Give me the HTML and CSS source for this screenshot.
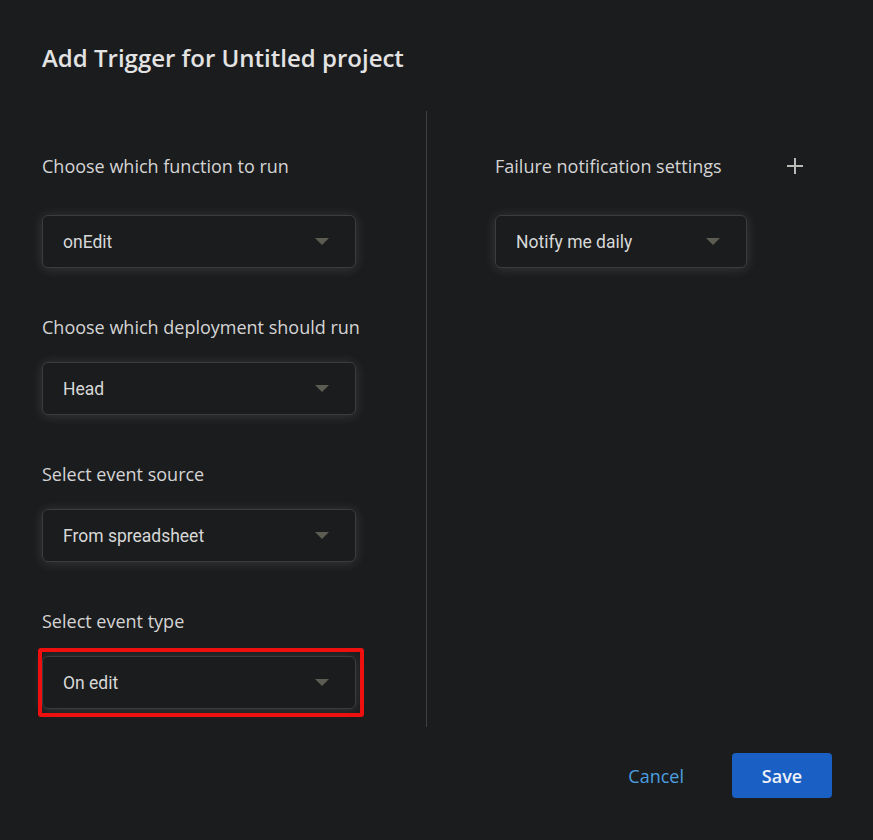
FILE: index.html
```html
<!DOCTYPE html>
<html lang="en">
<head>
    <meta charset="UTF-8">
    <meta name="viewport" content="width=device-width, initial-scale=1.0">
    <title>Add Trigger</title>
    <link rel="stylesheet" href="styles.css">
</head>
<body>
    <div class="dialogo">
        <h1 class="titulo">Add Trigger for Untitled project</h1>

        <div class="cuerpo">
            <!-- Columna izquierda -->
            <div class="columna-izq">
                <div class="campo primero">
                    <div class="etiqueta">Choose which function to run</div>
                    <div class="selector">
                        <span>onEdit</span>
                        <span class="flecha"></span>
                    </div>
                </div>
                <div class="campo">
                    <div class="etiqueta">Choose which deployment should run</div>
                    <div class="selector">
                        <span>Head</span>
                        <span class="flecha"></span>
                    </div>
                </div>
                <div class="campo">
                    <div class="etiqueta">Select event source</div>
                    <div class="selector">
                        <span>From spreadsheet</span>
                        <span class="flecha"></span>
                    </div>
                </div>
                <div class="campo">
                    <div class="etiqueta">Select event type</div>
                    <div class="selector marcado">
                        <span>On edit</span>
                        <span class="flecha"></span>
                    </div>
                </div>
            </div>

            <!-- Columna derecha -->
            <div class="columna-der">
                <div class="campo primero">
                    <div class="fila-etiqueta">
                        <div class="etiqueta">Failure notification settings</div>
                        <svg class="mas" width="18" height="18" viewBox="0 0 18 18">
                            <path d="M9 1v16M1 9h16" stroke="currentColor" stroke-width="2" fill="none"/>
                        </svg>
                    </div>
                    <div class="selector corto">
                        <span>Notify me daily</span>
                        <span class="flecha"></span>
                    </div>
                </div>
            </div>
        </div>

        <div class="pie">
            <button class="boton-cancelar">Cancel</button>
            <button class="boton-guardar">Save</button>
        </div>
    </div>
</body>
</html>
```

FILE: styles.css
```css
body {
    margin: 0;
    background: #1b1c1e;
    font-family: 'Open Sans', 'Noto Sans', sans-serif;
    color: #d6d6d6;
}

.dialogo {
    padding: 42px 41px 0 42px;
}

.titulo {
    margin: 0;
    font-size: 24px;
    line-height: 32px;
    font-weight: 600;
    color: #e3e3e3;
}

/* Cuerpo con dos columnas */
.cuerpo {
    display: flex;
    margin-top: 37px;
}

.columna-izq {
    width: 384px;
    padding: 43px 0 18px 0;
    border-right: 1px solid #3d4240;
    display: flex;
    flex-direction: column;
    gap: 47px;
}

.columna-der {
    padding: 43px 0 0 68px;
    width: 306px;
}

.campo {
    display: flex;
    flex-direction: column;
    gap: 23px;
}

.campo.primero {
    gap: 37px;
}

.etiqueta {
    font-size: 18px;
    line-height: 24px;
    color: #d4d4d4;
}

.fila-etiqueta {
    display: flex;
    justify-content: space-between;
    align-items: center;
}

.mas {
    color: #b9b9b5;
    margin-right: -3px;
}

.selector {
    position: relative;
    box-sizing: border-box;
    width: 314px;
    height: 53px;
    padding: 0 26px 0 20px;
    display: flex;
    justify-content: space-between;
    align-items: center;
    background: #1a1c1d;
    border: 1px solid #3a3d3e;
    border-radius: 6px;
    box-shadow: 0 1px 12px rgba(200, 210, 205, 0.17);
    font-family: Roboto, 'Liberation Sans', sans-serif;
    font-size: 17.5px;
    color: #d8d8d8;
}

.selector.corto {
    width: 252px;
}

.flecha {
    width: 0;
    height: 0;
    border-left: 7px solid transparent;
    border-right: 7px solid transparent;
    border-top: 7px solid #5c5c52;
}

/* Recuadro rojo sobre el último selector */
.selector.marcado::after {
    content: '';
    position: absolute;
    top: -9px;
    left: -5px;
    right: -9px;
    bottom: -9px;
    border: 4px solid #ee0f0f;
    border-radius: 3px;
}

/* Pie con botones */
.pie {
    display: flex;
    justify-content: flex-end;
    align-items: center;
    margin-top: 26px;
    gap: 24px;
}

.boton-cancelar {
    background: none;
    border: none;
    padding: 0 24px;
    font-family: 'Open Sans', sans-serif;
    font-size: 18px;
    font-weight: 500;
    color: #4b9fe0;
}

.boton-guardar {
    width: 100px;
    height: 45px;
    border: none;
    border-radius: 4px;
    background: #1a5fc4;
    color: #eef2f8;
    font-family: 'Open Sans', sans-serif;
    font-size: 18px;
    font-weight: 600;
}
```
